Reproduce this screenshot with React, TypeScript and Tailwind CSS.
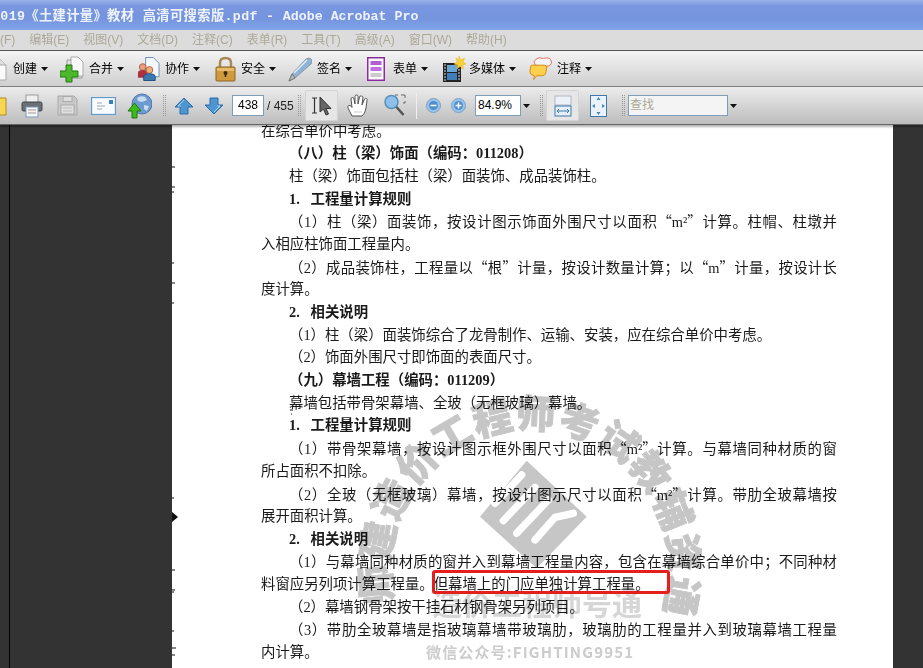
import React from "react";

const serif = "font-['Liberation_Serif','Noto_Sans_CJK_SC',serif]";

function Caret({ className = "" }: { className?: string }) {
  return (
    <svg width="7" height="4" viewBox="0 0 7 4" className={className}>
      <path d="M0 0h7L3.500 4z" fill="#111" />
    </svg>
  );
}

function Grip({ className = "" }: { className?: string }) {
  return <div className={`w-[3px] h-[21px] border-x border-dotted border-[#999] ${className}`} />;
}

const DocIcon = () => (
  <svg width="22" height="26" viewBox="0 0 22 26" className="-ml-[14px]">
    <path d="M2 2h11l7 7v15H2z" fill="#fafafa" stroke="#aaa" />
    <path d="M13 2v7h7" fill="#ddd" stroke="#aaa" />
  </svg>
);
const MergeIcon = () => (
  <svg width="24" height="28" viewBox="0 0 24 28">
    <path d="M7 5h9l6 5v13H7z" fill="#e4e4e4" stroke="#999" />
    <path d="M11 2h7l5 5v14H11z" fill="#f8f8f8" stroke="#aaa" />
    <path d="M6 10h6v6h6v6h-6v5H6v-5H0v-6h6z" fill="#4cb82c" stroke="#227a10" />
  </svg>
);
const CollabIcon = () => (
  <svg width="23" height="26" viewBox="0 0 24 26">
    <path d="M9 1h8l6 6v14H9z" fill="#f4f7fc" stroke="#6a8dbb" />
    <circle cx="6" cy="11" r="3.500" fill="#e8a080" stroke="#b05c40" />
    <path d="M1 22v-5q0-3 5-3t5 3v5z" fill="#b03040" />
    <circle cx="13" cy="14" r="3.500" fill="#f0b080" stroke="#b06c30" />
    <path d="M7 25v-4q0-3 6-3t6 3v4z" fill="#3a78b0" stroke="#1f4f80" />
  </svg>
);
const LockIcon = () => (
  <svg width="21" height="26" viewBox="0 0 21 26">
    <path d="M5 12V7q0-5 5.500-5T16 7v5" fill="none" stroke="#a88a58" strokeWidth="2.500" />
    <rect x="1" y="11" width="19" height="14" rx="1" fill="#cf9a3c" stroke="#8a6420" />
    <rect x="2" y="12" width="17" height="3" fill="#e6bd6c" />
    <circle cx="10.500" cy="17" r="2" fill="#3a2c10" />
    <rect x="9.700" y="17" width="1.600" height="4" fill="#3a2c10" />
  </svg>
);
const PenIcon = () => (
  <svg width="24" height="26" viewBox="0 0 24 26">
    <path d="M1 25l3-7L18 3q3-2 5 0t0 5L7 22z" fill="#8db4d8" stroke="#8a97a4" />
    <path d="M6 17L19 4" stroke="#e4eef8" strokeWidth="1.500" />
    <path d="M1 25l3-7 3 4z" fill="#bbb" stroke="#777" />
  </svg>
);
const FormIcon = () => (
  <svg width="21" height="24" viewBox="0 0 21 24">
    <rect x="0.750" y="0.750" width="16.500" height="22.500" fill="#fafafa" stroke="#8a2ca0" strokeWidth="1.500" />
    <rect x="3.500" y="4" width="11" height="4" fill="#b060d0" />
    <rect x="3.500" y="10" width="11" height="4" fill="#c070e0" />
    <rect x="3.500" y="16" width="11" height="4" fill="#ccc" />
  </svg>
);
const MediaIcon = () => (
  <svg width="23" height="26" viewBox="0 0 23 26">
    <rect x="0" y="7" width="18" height="19" fill="#222" />
    <path d="M1 9h2M1 12h2M1 15h2M1 18h2M1 21h2M1 24h2M15 14h2M15 17h2M15 20h2M15 23h2" stroke="#ddd" />
    <rect x="4" y="9" width="10" height="7" fill="#6aa8d8" />
    <rect x="4" y="17" width="10" height="7" fill="#3f7eb8" />
    <path d="M16 0l1.500 4 4-2-1.500 4 3 2-3.500 1 1 4-3.500-2.500L14 13l.5-4L11 8l3-2-1-4 3 2z" fill="#f7d23a" stroke="#eeb010" strokeWidth="0.500" />
  </svg>
);
const CommentIcon = () => (
  <svg width="23" height="26" viewBox="0 0 24 26">
    <path d="M7 3q3-3 8-1 6-2 8 2t-3 6H9Q3 7 7 3z" fill="#f4f4f4" stroke="#e87060" />
    <path d="M3 9h13q3 0 2.500 3l-1 5q-1 3-3 3H8l-3 4 .5-4Q1 19 1 16l.5-4Q1.500 9 3 9z" fill="#fcd04c" stroke="#d88a10" />
  </svg>
);
const FolderIcon = () => (
  <svg width="16" height="22" viewBox="0 0 16 22" className="-ml-2">
    <path d="M1 5h5l2-2h6v17H1z" fill="#f8d850" stroke="#b08a20" />
  </svg>
);
const PrinterIcon = () => (
  <svg width="22" height="24" viewBox="0 0 22 24">
    <rect x="5" y="1" width="12" height="8" fill="#f0f0f0" stroke="#999" />
    <rect x="1" y="8" width="20" height="9" rx="1.500" fill="#6a7076" stroke="#444" />
    <rect x="5" y="13" width="12" height="10" fill="#f8f8f8" stroke="#7a9ab8" />
    <path d="M7 16h8M7 19h8" stroke="#999" />
  </svg>
);
const SaveIcon = () => (
  <svg width="21" height="21" viewBox="0 0 21 21">
    <path d="M1 1h16l3 3v16H1z" fill="#c9c9c9" stroke="#aaa" />
    <rect x="6" y="1.500" width="9" height="5" fill="#ddd" stroke="#aaa" />
    <rect x="4" y="10" width="13" height="9" fill="#e0e0e0" stroke="#aaa" />
    <path d="M6 13h9M6 16h9" stroke="#bbb" />
  </svg>
);
const MailIcon = () => (
  <svg width="25" height="18" viewBox="0 0 25 18">
    <rect x="0.500" y="0.500" width="24" height="17" fill="#f8fbfe" stroke="#5f9bcb" strokeWidth="1.300" />
    <rect x="18" y="3" width="4" height="4" fill="#3d7fb7" />
    <path d="M6 6h5M6 9h8M6 12h5" stroke="#a5a5a5" />
  </svg>
);
const GlobeIcon = () => (
  <svg width="25" height="26" viewBox="0 0 25 26">
    <circle cx="15" cy="11" r="10" fill="#6d9bd0" stroke="#4d76aa" />
    <path d="M10 5q4-3 8-1l2 3-5 2-4-1zM17 12l5 1-2 5-3-2z" fill="#c9dcf0" />
    <path d="M7.500 10L14 18h-4v7H5v-7H1z" fill="#3dbb1a" stroke="#1a7a10" />
  </svg>
);
const ArrowIcon = ({ down = false }: { down?: boolean }) => (
  <svg width="20" height="18" viewBox="0 0 20 18" className={down ? "rotate-180" : ""}>
    <path d="M10 1l9 9h-5v7H6v-7H1z" fill="#4d96d2" stroke="#2a6ca8" />
    <path d="M10 3l-6 6h3" fill="none" stroke="#a8d4f4" />
  </svg>
);
const SelectIcon = () => (
  <svg width="22" height="22" viewBox="0 0 22 22">
    <path d="M1 3h5M1 18h5M3.500 3v15" stroke="#333" strokeWidth="1.200" fill="none" />
    <path d="M9 2v15l3.500-3 2.500 6 2.500-1-2.500-5.500H20z" fill="#666" stroke="#333" />
  </svg>
);
const HandIcon = () => (
  <svg width="22" height="24" viewBox="0 0 22 24">
    <path d="M5 22l-4-8q-1-2 1-2.500t3 2L4 5q0-1.500 1.500-1.500T7 5l1 5 0-7.500Q8 1 9.500 1T11 2.500V10l1.500-7q.5-1.500 2-1T16 3l-1 8 2.500-6q1-1 2-.5t.5 2L19 14q-1 6-4 8z" fill="#fff" stroke="#555" />
    <path d="M7 18h8" stroke="#ccc" />
  </svg>
);
const ZoomIcon = () => (
  <svg width="22" height="24" viewBox="0 0 22 24">
    <circle cx="7.500" cy="8" r="6.500" fill="#8ec0ea" stroke="#5b8fb8" strokeWidth="1.500" />
    <path d="M12.500 13l7 8" stroke="#555" strokeWidth="2.500" />
    <path d="M11 1h3M17 1h4v3M21 7v2h-2" stroke="#666" fill="none" />
  </svg>
);
const RoundBtn = ({ plus = false }: { plus?: boolean }) => (
  <svg width="15" height="15" viewBox="0 0 15 15">
    <circle cx="7.500" cy="7.500" r="7" fill="#9cc4e8" stroke="#7a9fc4" />
    <circle cx="7.500" cy="7.500" r="4.500" fill="#4d8ed0" />
    <path d={plus ? "M4.500 7.500h6M7.500 4.500v6" : "M4.500 7.500h6"} stroke="#fff" strokeWidth="1.500" />
  </svg>
);
const FitWidthIcon = () => (
  <svg width="18" height="22" viewBox="0 0 18 22">
    <rect x="1" y="1" width="16" height="9" fill="#eef2f8" stroke="#b0b8c4" />
    <rect x="1" y="11" width="16" height="10" fill="#e6f0fa" stroke="#3f78ac" />
    <path d="M3 16h12M3 16l2-2M3 16l2 2M15 16l-2-2M15 16l-2 2" stroke="#3f78ac" fill="none" />
  </svg>
);
const FitPageIcon = () => (
  <svg width="17" height="22" viewBox="0 0 17 22">
    <rect x="0.500" y="0.500" width="16" height="21" fill="#eaf3fb" stroke="#3f78ac" />
    <path d="M8.500 2l2 3h-4zM8.500 20l2-3h-4zM2 11l3-2v4zM15 11l-3-2v4z" fill="#3f8ac4" />
  </svg>
);

const menus = ["(F)", "编辑(E)", "视图(V)", "文档(D)", "注释(C)", "表单(R)", "工具(T)", "高级(A)", "窗口(W)", "帮助(H)"];

type Line = { t: string; b?: boolean; i?: boolean; j?: boolean };
const lines: Line[] = [
  { t: "在综合单价中考虑。" },
  { t: "（八）柱（梁）饰面（编码：011208）", b: true, i: true },
  { t: "柱（梁）饰面包括柱（梁）面装饰、成品装饰柱。", i: true },
  { t: "1.\u2002\u2005工程量计算规则", b: true, i: true },
  { t: "（1）柱（梁）面装饰，按设计图示饰面外围尺寸以面积“m²”计算。柱帽、柱墩并", i: true, j: true },
  { t: "入相应柱饰面工程量内。" },
  { t: "（2）成品装饰柱，工程量以“根”计量，按设计数量计算；以“m”计量，按设计长", i: true, j: true },
  { t: "度计算。" },
  { t: "2.\u2002\u2005相关说明", b: true, i: true },
  { t: "（1）柱（梁）面装饰综合了龙骨制作、运输、安装，应在综合单价中考虑。", i: true },
  { t: "（2）饰面外围尺寸即饰面的表面尺寸。", i: true },
  { t: "（九）幕墙工程（编码：011209）", b: true, i: true },
  { t: "幕墙包括带骨架幕墙、全玻（无框玻璃）幕墙。", i: true },
  { t: "1.\u2002\u2005工程量计算规则", b: true, i: true },
  { t: "（1）带骨架幕墙，按设计图示框外围尺寸以面积“m²”计算。与幕墙同种材质的窗", i: true, j: true },
  { t: "所占面积不扣除。" },
  { t: "（2）全玻（无框玻璃）幕墙，按设计图示尺寸以面积“m²”计算。带肋全玻幕墙按", i: true, j: true },
  { t: "展开面积计算。" },
  { t: "2.\u2002\u2005相关说明", b: true, i: true },
  { t: "（1）与幕墙同种材质的窗并入到幕墙工程量内容，包含在幕墙综合单价中；不同种材", i: true, j: true },
  { t: "料窗应另列项计算工程量。但幕墙上的门应单独计算工程量。" },
  { t: "（2）幕墙钢骨架按干挂石材钢骨架另列项目。", i: true },
  { t: "（3）带肋全玻幕墙是指玻璃幕墙带玻璃肋，玻璃肋的工程量并入到玻璃幕墙工程量", i: true, j: true },
  { t: "内计算。" },
];

function Rich({ t }: { t: string }) {
  return (
    <>
      {t.split(/([“”])/).map((p, i) =>
        p === "“" || p === "”" ? (
          <span key={i} className="font-['Noto_Sans_CJK_SC',sans-serif]">{p}</span>
        ) : (
          <span key={i}>{p}</span>
        )
      )}
    </>
  );
}

function Tool({ icon, label, gap, lg = "ml-[5px]" }: { icon: React.ReactNode; label: string; gap: string; lg?: string }) {
  return (
    <div className={`flex items-center ${gap}`}>
      {icon}
      <span className={`text-[12px] text-black whitespace-nowrap ${lg}`}>{label}</span>
      <Caret className="ml-[4px]" />
    </div>
  );
}

function Watermark() {
  return (
    <svg width="923" height="668" viewBox="0 0 923 668" className="absolute left-0 top-0 pointer-events-none mix-blend-multiply">
      <defs>
        <path id="ring" d="M397 612 A 140 140 0 1 1 663 612" fill="none" />
      </defs>
      <text fontFamily="'Noto Sans CJK SC',sans-serif" fontWeight="900" fontSize="39" fill="#c6c6c6" stroke="#c6c6c6" strokeWidth="0.800" letterSpacing="1">
        <textPath href="#ring" startOffset="10">师建造价工程师考试教辅资通</textPath>
      </text>
      <g transform="translate(340 400) scale(0.3333)">
        <path d="M560 182 L740 350 L590 505 L420 350 Z" fill="#c6c6c6" />
        <g fill="none" stroke="#fff" strokeWidth="22" strokeLinecap="round" strokeLinejoin="round">
          <path d="M545 225 L465 310" />
          <path d="M585 262 L490 362" />
          <path d="M625 300 L530 400" />
          <path d="M700 340 L645 352 L585 420" />
        </g>
      </g>
      <text x="432" y="615" fontFamily="'Noto Sans CJK SC',sans-serif" fontWeight="700" fontSize="30" fill="#d6d6d6">造价工程师号通</text>
      <text x="426" y="658" fontFamily="'Noto Sans CJK SC',sans-serif" fontWeight="700" fontSize="15" fill="#cccccc" letterSpacing="1.150">微信公众号:FIGHTING9951</text>
      <g stroke="#111" strokeWidth="1" fill="none">
        <path d="M172 167h3M172 187h3M172 192h2M172 263h2M172 283h3M172 303h2M172 498h2M172 570h3M172 590h3M172 592h2M172 631h2M172 648h4M172 655h3" />
        <path d="M290 410h3M291 414h1" />
      </g>
      <path d="M172 512l6 5-6 5z" fill="#111" />
    </svg>
  );
}

export default function App() {
  return (
    <div className="relative w-[923px] h-[668px] overflow-hidden flex flex-col bg-[#333] font-['Liberation_Sans','Noto_Sans_CJK_SC',sans-serif]">
      <div className="h-[30px] shrink-0 flex items-center pt-[3px] bg-[linear-gradient(#9ab1ec_0,#8ba5e6_3px,#7897e0_6px,#7594de_18px,#7fa2e8_29px)]">
        <span className="-ml-[8px] font-['Liberation_Mono','Noto_Sans_CJK_SC',monospace] font-bold text-[13.300px] text-[#eef2fc] whitespace-pre"><span className="tracking-[0.340px]">2019《土建计量》教材 高清可搜索版.pdf - </span><span>Adobe Acrobat Pro</span></span>
      </div>
      <div className="h-[20px] shrink-0 bg-[#dcdcdc] flex items-center gap-[14px] text-[12px] text-[#aca899] whitespace-nowrap">
        {menus.map((m) => (
          <span key={m}>{m}</span>
        ))}
      </div>
      <div className="h-[37px] shrink-0 border-t border-[#555] border-b border-b-[#808080] bg-[linear-gradient(#f4f4f4,#cfcfcf)] flex items-center">
        <Tool icon={<DocIcon />} label="创建" gap="" />
        <Tool icon={<MergeIcon />} label="合并" gap="ml-[12px]" />
        <Tool icon={<CollabIcon />} label="协作" gap="ml-[13px]" />
        <Tool icon={<LockIcon />} label="安全" gap="ml-[15px]" />
        <Tool icon={<PenIcon />} label="签名" gap="ml-[12px]" />
        <Tool icon={<FormIcon />} label="表单" gap="ml-[15px]" />
        <Tool icon={<MediaIcon />} label="多媒体" gap="ml-[15px]" lg="ml-[3px]" />
        <Tool icon={<CommentIcon />} label="注释" gap="ml-[13px]" />
      </div>
      <div className="relative z-10 h-[38px] shrink-0 border-b border-b-[#666] shadow-[0_2px_2px_rgba(0,0,0,0.3)] bg-[linear-gradient(#ececec,#bdbdbd)] flex items-center">
        <FolderIcon />
        <div className="ml-[13px]"><PrinterIcon /></div>
        <div className="ml-[14px]"><SaveIcon /></div>
        <div className="ml-[13px]"><MailIcon /></div>
        <div className="ml-[11px]"><GlobeIcon /></div>
        <Grip className="ml-[11px]" />
        <div className="ml-[8px]"><ArrowIcon /></div>
        <div className="ml-[10px]"><ArrowIcon down /></div>
        <div className="ml-[8px] w-[32px] h-[21px] bg-white border border-[#7f9db9] text-[12px] text-center leading-[19px]">438</div>
        <span className="ml-[3px] w-[26px] text-[12px] text-[#222] whitespace-nowrap">/ 455</span>
        <Grip className="ml-[5px]" />
        <div className="ml-[4px] w-[33px] h-[31px] rounded-[2px] bg-[#e6e6e6] border border-[#d4d4d4] flex items-center justify-center"><SelectIcon /></div>
        <div className="ml-[9px]"><HandIcon /></div>
        <div className="ml-[15px]"><ZoomIcon /></div>
        <div className="ml-[10px] w-px h-[26px] bg-[#eee]" />
        <div className="ml-[9px]"><RoundBtn /></div>
        <div className="ml-[10px]"><RoundBtn plus /></div>
        <div className="ml-[9px] w-[46px] h-[21px] bg-white border border-[#7f9db9] text-[12px] pl-[2px] leading-[19px]">84.9%</div>
        <Caret className="ml-[2px]" />
        <Grip className="ml-[10px]" />
        <div className="ml-[3px] w-[33px] h-[31px] rounded-[2px] bg-[#e6e6e6] border border-[#d4d4d4] flex items-center justify-center"><FitWidthIcon /></div>
        <div className="ml-[11px]"><FitPageIcon /></div>
        <Grip className="ml-[15px]" />
        <div className="ml-[3px] w-[100px] h-[21px] bg-[#f4f4f4] border border-[#7f9db9] text-[12px] text-[#aca899] pl-[1px] leading-[19px]">查找</div>
        <Caret className="ml-[2px]" />
      </div>
      <div className="flex-1 min-h-0 flex overflow-hidden">
        <div className="w-[172px] shrink-0 bg-[#333] flex">
          <div className="ml-[9px] w-px bg-black" />
        </div>
        <div className={`w-[721px] shrink-0 bg-white pl-[89px] pr-[56px] ${serif} text-[14.400px] text-[#1a1a1a]`}>
          <div className="-mt-[5.500px]">
            {lines.map((l, i) => (
              <div
                key={i}
                className={`h-[22.700px] leading-[22.700px] whitespace-nowrap ${l.i ? "pl-[28px]" : ""} ${l.b ? "font-bold" : ""} ${l.j ? "whitespace-normal text-justify [text-align-last:justify] overflow-hidden" : ""}`}
              >
                <Rich t={l.t} />
              </div>
            ))}
          </div>
        </div>
        <div className="flex-1 bg-[#333]" />
      </div>
      <Watermark />
      <div className="absolute left-[432px] top-[570px] w-[238px] h-[24px] border-[3px] border-[#e4201c] rounded-[3px]" />
    </div>
  );
}
